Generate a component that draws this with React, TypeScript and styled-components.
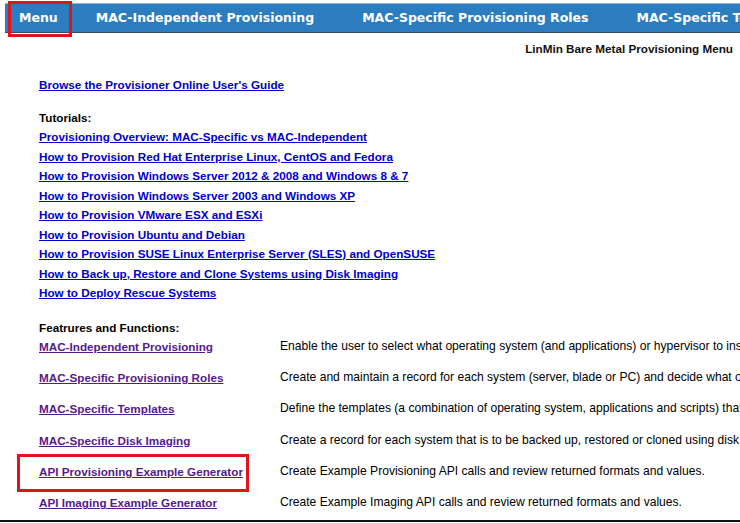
import React from "react";
import styled, { createGlobalStyle } from "styled-components";

const GlobalStyle = createGlobalStyle`
  html, body { margin: 0; padding: 0; background: #ffffff; }
  body { font-family: "Liberation Sans", Arial, sans-serif; overflow: hidden; }
`;

const Page = styled.div`
  width: 740px;
  height: 523px;
  padding-top: 3px;
  box-sizing: border-box;
  display: flex;
  flex-direction: column;
  overflow: hidden;
  & > * { flex-shrink: 0; }
`;

const NavBar = styled.nav`
  margin-left: 5px;
  height: 30px;
  background: #2b7dbf;
  border-top: 1px solid #8fb6d6;
  border-bottom: 1px solid #3a4a5a;
  display: flex;
  align-items: center;
  white-space: nowrap;
  box-sizing: border-box;
  overflow: visible;
`;

const NavItem = styled.span<{ $active?: boolean }>`
  position: relative;
  font-family: "DejaVu Sans", sans-serif;
  font-weight: bold;
  font-size: 12.5px;
  line-height: 16px;
  color: #ffffff;
  padding: 0 ${(p) => (p.$active ? "14px" : "24px")};
  flex-shrink: 0;
  &::after {
    content: "";
    display: ${(p) => (p.$active ? "block" : "none")};
    position: absolute;
    left: 3px;
    right: 0px;
    top: -9px;
    bottom: -11px;
    border: 3px solid #e0141a;
  }
`;

const Title = styled.div`
  text-align: right;
  padding-right: 7px;
  margin-top: 9px;
  font-size: 11.7px;
  font-weight: bold;
  color: #111;
  line-height: 13px;
`;

const Content = styled.main`
  padding-left: 39px;
  display: flex;
  flex-direction: column;
  flex: 1;
  min-height: 0;
  & > * { flex-shrink: 0; }
`;

const Link = styled.a<{ $visited?: boolean }>`
  color: ${(p) => (p.$visited ? "#551a8b" : "#0000cc")};
  text-decoration: underline;
  font-weight: bold;
  font-size: 11.7px;
`;

const GuideRow = styled.div`
  margin-top: 20px;
  line-height: 19px;
  font-size: 11.7px;
`;

const Label = styled.div<{ $top: number }>`
  margin-top: ${(p) => p.$top}px;
  font-size: 11.7px;
  font-weight: bold;
  color: #000;
  line-height: 19px;
`;

const LinkList = styled.ul`
  list-style: none;
  margin: 0;
  padding: 0;
`;

const LinkItem = styled.li`
  font-size: 11.7px;
  line-height: 19.5px;
`;

const FeatureTable = styled.div`
  display: grid;
  grid-template-columns: 241px 1fr;
  grid-auto-rows: 19px;
  row-gap: 12.4px;
  align-items: start;
`;

const FeatureCell = styled.div<{ $boxed?: boolean }>`
  position: relative;
  justify-self: start;
  font-size: 11.7px;
  line-height: 19px;
  white-space: nowrap;
  &::after {
    content: "";
    display: ${(p) => (p.$boxed ? "block" : "none")};
    position: absolute;
    left: -22px;
    right: -6px;
    top: -8px;
    bottom: -11px;
    border: 3px solid #e0141a;
  }
`;

const Desc = styled.div`
  font-size: 12.1px;
  color: #000;
  line-height: 19px;
  white-space: nowrap;
  overflow: hidden;
`;

const BottomRule = styled.div`
  margin-top: auto;
  margin-left: -39px;
  margin-bottom: 1px;
  height: 2px;
  background: #111;
`;

const tutorials = [
  "Provisioning Overview: MAC-Specific vs MAC-Independent",
  "How to Provision Red Hat Enterprise Linux, CentOS and Fedora",
  "How to Provision Windows Server 2012 & 2008 and Windows 8 & 7",
  "How to Provision Windows Server 2003 and Windows XP",
  "How to Provision VMware ESX and ESXi",
  "How to Provision Ubuntu and Debian",
  "How to Provision SUSE Linux Enterprise Server (SLES) and OpenSUSE",
  "How to Back up, Restore and Clone Systems using Disk Imaging",
  "How to Deploy Rescue Systems",
];

const features: { name: string; desc: string; boxed?: boolean }[] = [
  {
    name: "MAC-Independent Provisioning",
    desc: "Enable the user to select what operating system (and applications) or hypervisor to install on a system at boot time.",
  },
  {
    name: "MAC-Specific Provisioning Roles",
    desc: "Create and maintain a record for each system (server, blade or PC) and decide what operating system to install.",
  },
  {
    name: "MAC-Specific Templates",
    desc: "Define the templates (a combination of operating system, applications and scripts) that can be provisioned.",
  },
  {
    name: "MAC-Specific Disk Imaging",
    desc: "Create a record for each system that is to be backed up, restored or cloned using disk imaging.",
  },
  {
    name: "API Provisioning Example Generator",
    desc: "Create Example Provisioning API calls and review returned formats and values.",
    boxed: true,
  },
  {
    name: "API Imaging Example Generator",
    desc: "Create Example Imaging API calls and review returned formats and values.",
  },
];

export default function App() {
  return (
    <>
      <GlobalStyle />
      <Page>
        <NavBar>
          <NavItem $active>Menu</NavItem>
          <NavItem>MAC-Independent Provisioning</NavItem>
          <NavItem>MAC-Specific Provisioning Roles</NavItem>
          <NavItem>MAC-Specific Templates</NavItem>
        </NavBar>
        <Title>LinMin Bare Metal Provisioning Menu</Title>
        <Content>
          <GuideRow>
            <Link href="#">Browse the Provisioner Online User's Guide</Link>
          </GuideRow>
          <Label $top={14}>Tutorials:</Label>
          <LinkList>
            {tutorials.map((t) => (
              <LinkItem key={t}>
                <Link href="#">{t}</Link>
              </LinkItem>
            ))}
          </LinkList>
          <Label $top={15}>Featrures and Functions:</Label>
          <FeatureTable>
            {features.map((f) => (
              <React.Fragment key={f.name}>
                <FeatureCell $boxed={f.boxed}>
                  <Link href="#" $visited>
                    {f.name}
                  </Link>
                </FeatureCell>
                <Desc>{f.desc}</Desc>
              </React.Fragment>
            ))}
          </FeatureTable>
          <BottomRule />
        </Content>
      </Page>
    </>
  );
}
